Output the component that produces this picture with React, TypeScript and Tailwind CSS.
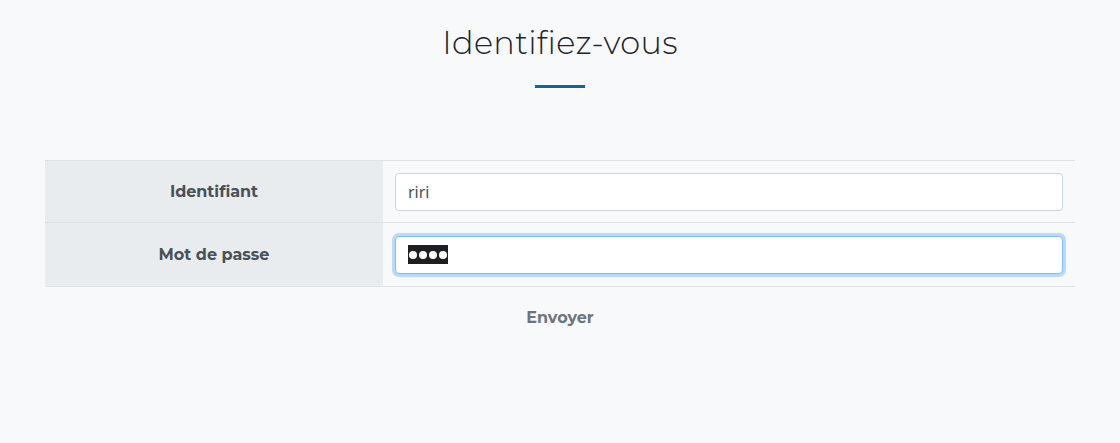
export default function App() {
    return (
        <div className="min-h-[443px] w-full bg-[#f8f9fa] text-[#212529]" style={{ fontFamily: "Montserrat, Inter, 'Noto Sans', sans-serif" }}>
            <div className="flex flex-col items-center pt-[24px]">
                <h1 className="text-[32px] font-light leading-[38px] tracking-[0.3px]">Identifiez-vous</h1>
                <div className="mt-[23px] h-[3px] w-[50px] bg-[#17658f]" />
            </div>
            <div className="mx-[45px] mt-[72px]">
                <div className="flex h-[63px] border-y border-[#dee2e6]">
                    <div className="flex w-[338px] items-center justify-center bg-[#e9ecef] text-[16px] font-bold text-[#495057]">Identifiant</div>
                    <div className="flex flex-1 items-center px-[12px]">
                        <div className="flex h-[38px] w-full items-center rounded-[4px] border border-[#ced4da] bg-white px-[12px] font-['Noto_Sans',sans-serif] text-[16px] text-[#495057]">riri</div>
                    </div>
                </div>
                <div className="flex h-[64px] border-b border-[#dee2e6]">
                    <div className="flex w-[338px] items-center justify-center bg-[#e9ecef] text-[16px] font-bold text-[#495057]">Mot de passe</div>
                    <div className="flex flex-1 items-center px-[12px]">
                        <div className="flex h-[38px] w-full items-center rounded-[4px] border border-[#80bdff] bg-white px-[12px] shadow-[0_0_0_3px_rgba(0,123,255,0.25)]">
                            <span className="flex h-[19px] items-center gap-[2px] bg-[#1d1f21] px-[1px]">
                                <span className="h-[8px] w-[8px] rounded-full bg-white" />
                                <span className="h-[8px] w-[8px] rounded-full bg-white" />
                                <span className="h-[8px] w-[8px] rounded-full bg-white" />
                                <span className="h-[8px] w-[8px] rounded-full bg-white" />
                            </span>
                        </div>
                    </div>
                </div>
                <div className="flex justify-center pt-[19px]">
                    <button className="text-[16px] font-bold text-[#6c757d]">Envoyer</button>
                </div>
            </div>
        </div>
    )
}
